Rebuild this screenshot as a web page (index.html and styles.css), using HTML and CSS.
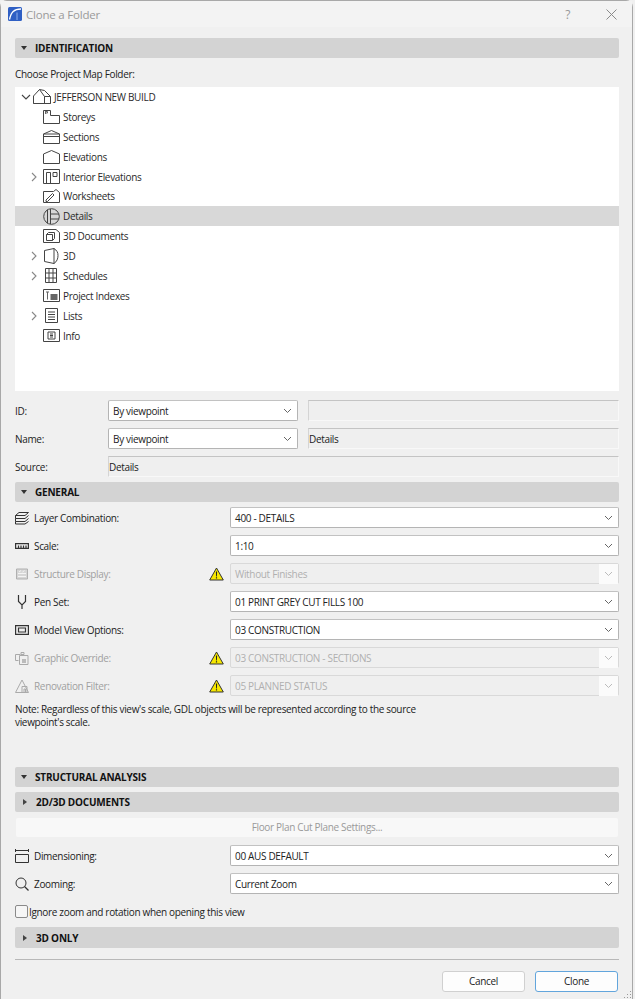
FILE: index.html
```html
<!DOCTYPE html>
<html lang="en">
<head>
<meta charset="utf-8">
<title>Clone a Folder</title>
<link rel="stylesheet" href="styles.css">
</head>
<body>
<div class="window">
  <header class="titlebar">
    <svg class="app-icon" width="14" height="14" viewBox="0 0 14 14"><rect width="14" height="14" rx="1.5" fill="#2f5fc4"/><path d="M1.5 12.5C3 5 6 2 13 2" fill="none" stroke="#fff" stroke-width="1.3"/><path d="M9 13V5.5" stroke="#8fb0ea" stroke-width="1"/></svg>
    <span class="title">Clone a Folder</span>
    <span class="help">?</span>
    <svg class="close" width="11" height="11" viewBox="0 0 11 11"><path d="M.5.5l10 10M10.500.5l-10 10" stroke="#8a8a8a" fill="none"/></svg>
  </header>
  <main class="content">
    <div class="section s-identification"><i class="tri-down"></i>IDENTIFICATION</div>
    <div class="choose">Choose Project Map Folder:</div>
    <div class="tree">
      <div class="node root"><svg class="chev" width="10" height="10" viewBox="0 0 10 10"><path d="M1 3l4 4 4-4" fill="none" stroke="#444" stroke-width="1.1"/></svg>
        <svg class="ic" width="18" height="15" viewBox="0 0 18 15"><path d="M.5 14.500V7L6.500.500l5 1 6 6v7zM6.500.500l5 7v7M11.500 7.500h6M.5 14.500h17" fill="none" stroke="#444"/></svg><span>JEFFERSON NEW BUILD</span></div>
      <div class="node"><svg class="ic" width="17" height="14" viewBox="0 0 17 14"><path d="M.5.500h7v5h9v8H.5z" fill="none" stroke="#444"/><path d="M2.500 1v3M2.500 1.500h2v1.500h-2" fill="none" stroke="#666"/></svg><span>Storeys</span></div>
      <div class="node"><svg class="ic" width="17" height="14" viewBox="0 0 17 14"><path d="M.5 4L8.500.5l8 3.500v9.500H.5zM.5 4h16M.5 6.500h16" fill="none" stroke="#444"/></svg><span>Sections</span></div>
      <div class="node"><svg class="ic" width="17" height="14" viewBox="0 0 17 14"><path d="M.5 4L8.500.5l8 3.500v9.500H.5z" fill="none" stroke="#444"/></svg><span>Elevations</span></div>
      <div class="node"><svg class="chev" width="10" height="10" viewBox="0 0 10 10"><path d="M3 1l4 4-4 4" fill="none" stroke="#888" stroke-width="1.100"/></svg><svg class="ic" width="17" height="15" viewBox="0 0 17 15"><path d="M.5.500h16v14H.5zM3.500 14V3.500h4V14M10 3.500h4v4h-4z" fill="none" stroke="#444"/></svg><span>Interior Elevations</span></div>
      <div class="node"><svg class="ic" width="17" height="14" viewBox="0 0 17 14"><path d="M.5 2.500h10L13 .5l3.500 3v10H.5zM3 11l6.500-6.500L11 6l-6.500 6.500H3z" fill="none" stroke="#444"/></svg><span>Worksheets</span></div>
      <div class="node selected"><svg class="ic" width="17" height="17" viewBox="0 0 17 17"><circle cx="8.500" cy="8.500" r="7.800" fill="none" stroke="#444"/><path d="M4.500 1.500v14M7.500 1v15M7.500 6h8.500M7.500 11h8.500" fill="none" stroke="#444"/></svg><span>Details</span></div>
      <div class="node"><svg class="ic" width="17" height="14" viewBox="0 0 17 14"><path d="M.5.500h12.500l3.500 3v10H.5zM3.500 5.500h6v6h-6zM3.500 5.500l2-2h6v6l-2 2" fill="none" stroke="#444"/></svg><span>3D Documents</span></div>
      <div class="node"><svg class="chev" width="10" height="10" viewBox="0 0 10 10"><path d="M3 1l4 4-4 4" fill="none" stroke="#888" stroke-width="1.100"/></svg><svg class="ic" width="17" height="16" viewBox="0 0 17 16"><path d="M1.500 2.500L11 .5c3 2 4 4 4 7s-1 6-4 8l-9.500-2zM11 .5v15" fill="none" stroke="#444"/></svg><span>3D</span></div>
      <div class="node"><svg class="chev" width="10" height="10" viewBox="0 0 10 10"><path d="M3 1l4 4-4 4" fill="none" stroke="#888" stroke-width="1.100"/></svg><svg class="ic" width="17" height="15" viewBox="0 0 17 15"><path d="M2.500.5h11v14h-11zM2.500 5h11M2.500 10h11M6 .5v14M10 .5v14" fill="none" stroke="#444"/></svg><span>Schedules</span></div>
      <div class="node"><svg class="ic" width="17" height="13" viewBox="0 0 17 13"><path d="M.5.500h16v12H.5z" fill="none" stroke="#444"/><path d="M3 2.500h3v1H5v7H4v-7H3zM7.500 5h7v6h-7z" fill="#666"/></svg><span>Project Indexes</span></div>
      <div class="node"><svg class="chev" width="10" height="10" viewBox="0 0 10 10"><path d="M3 1l4 4-4 4" fill="none" stroke="#888" stroke-width="1.100"/></svg><svg class="ic" width="17" height="15" viewBox="0 0 17 15"><path d="M2.500.5h12v14h-12zM5 4h7M5 6.500h7M5 9h7M5 11.500h7" fill="none" stroke="#444"/></svg><span>Lists</span></div>
      <div class="node"><svg class="ic" width="17" height="13" viewBox="0 0 17 13"><path d="M.5.500h16v12H.5zM5 3h7v7H5zM7 5h3M7 6.500h3M7 8h3" fill="none" stroke="#444"/></svg><span>Info</span></div>
    </div>

    <div class="id-row first"><label class="id-label">ID:</label><div class="select"><span>By viewpoint</span><svg class="arrow" width="9" height="6" viewBox="0 0 9 6"><path d="M1 1l3.500 3.500L8 1" fill="none" stroke="#666"/></svg></div><div class="field"></div></div>
    <div class="id-row"><label class="id-label">Name:</label><div class="select"><span>By viewpoint</span><svg class="arrow" width="9" height="6" viewBox="0 0 9 6"><path d="M1 1l3.500 3.500L8 1" fill="none" stroke="#666"/></svg></div><div class="field">Details</div></div>
    <div class="id-row"><label class="id-label">Source:</label><div class="field wide">Details</div></div>

    <div class="section s-general"><i class="tri-down"></i>GENERAL</div>
    <div class="opts">
      <div class="opt"><svg class="oi" width="14" height="14" viewBox="0 0 14 14"><path d="M.5 4.500L4 1.500h9.500L10 4.500zM.5 4.500v3h9.500l3.500-3M.5 7.500v3h9.500l3.500-3M.5 10.500v2.500h9.500l3.500-2.500" fill="none" stroke="#333"/></svg><span class="opt-label">Layer Combination:</span><div class="select"><span>400 - DETAILS</span><svg class="arrow" width="9" height="6" viewBox="0 0 9 6"><path d="M1 1l3.500 3.500L8 1" fill="none" stroke="#666"/></svg></div></div>
      <div class="opt"><svg class="oi" width="14" height="14" viewBox="0 0 14 14"><path d="M.6 4.600h12.800v4.800H.6zM3.500 6.500v3M6 6.500v3M8.500 6.500v3M11 6.500v3" fill="none" stroke="#333" stroke-width="1.200"/></svg><span class="opt-label">Scale:</span><div class="select"><span>1:10</span><svg class="arrow" width="9" height="6" viewBox="0 0 9 6"><path d="M1 1l3.500 3.500L8 1" fill="none" stroke="#666"/></svg></div></div>
      <div class="opt off"><svg class="oi" width="14" height="14" viewBox="0 0 14 14"><path d="M1.500 2h11v10h-11z" fill="#d6d6d6" stroke="#b0b0b0"/><path d="M3 6.500h8M3 9.500h8M4 5l2-1.500M7.500 5l2-1.500" fill="none" stroke="#f4f4f4"/></svg><span class="opt-label">Structure Display:</span><svg class="warn" width="15" height="14" viewBox="0 0 15 14"><path d="M7.500 1L14.300 13H.7z" fill="#f7e800" stroke="#333"/><path d="M6.900 4.500h1.200l-.2 5h-.8zM6.900 10.300h1.200v1.300H6.900z" fill="#222"/></svg><div class="select"><span>Without Finishes</span><svg class="arrow" width="9" height="6" viewBox="0 0 9 6"><path d="M1 1l3.500 3.500L8 1" fill="none" stroke="#bbb"/></svg></div></div>
      <div class="opt"><svg class="oi pen" width="14" height="14" viewBox="0 0 14 14"><path d="M3.500 0v6.500L7 10l3.500-3.500V0M7 10v4" fill="none" stroke="#333" stroke-width="1.200"/></svg><span class="opt-label">Pen Set:</span><div class="select"><span>01 PRINT GREY CUT FILLS 100</span><svg class="arrow" width="9" height="6" viewBox="0 0 9 6"><path d="M1 1l3.500 3.500L8 1" fill="none" stroke="#666"/></svg></div></div>
      <div class="opt"><svg class="oi" width="14" height="14" viewBox="0 0 14 14"><path d="M.6 2.600h12.800v8.800H.6zM3.500 5h7v4h-7z" fill="none" stroke="#333" stroke-width="1.200"/></svg><span class="opt-label">Model View Options:</span><div class="select"><span>03 CONSTRUCTION</span><svg class="arrow" width="9" height="6" viewBox="0 0 9 6"><path d="M1 1l3.500 3.500L8 1" fill="none" stroke="#666"/></svg></div></div>
      <div class="opt off"><svg class="oi" width="14" height="14" viewBox="0 0 14 14"><path d="M.5 3.500h5M.5 3.500v6h3M6 1.500h3v2H6zM4.500 4.500h8.500v9H4.500z" fill="none" stroke="#aaa"/><path d="M7 8h4v4H7z" fill="#bbb"/></svg><span class="opt-label">Graphic Override:</span><svg class="warn" width="15" height="14" viewBox="0 0 15 14"><path d="M7.500 1L14.300 13H.7z" fill="#f7e800" stroke="#333"/><path d="M6.900 4.500h1.200l-.2 5h-.8zM6.900 10.300h1.200v1.300H6.900z" fill="#222"/></svg><div class="select"><span>03 CONSTRUCTION - SECTIONS</span><svg class="arrow" width="9" height="6" viewBox="0 0 9 6"><path d="M1 1l3.500 3.500L8 1" fill="none" stroke="#bbb"/></svg></div></div>
      <div class="opt off"><svg class="oi" width="14" height="14" viewBox="0 0 14 14"><path d="M.5 13.500L7 1l6.500 12.500zM7 13V7.500h5v5.500M9 13v-3h1.500v3" fill="none" stroke="#aaa"/></svg><span class="opt-label">Renovation Filter:</span><svg class="warn" width="15" height="14" viewBox="0 0 15 14"><path d="M7.500 1L14.300 13H.7z" fill="#f7e800" stroke="#333"/><path d="M6.900 4.500h1.200l-.2 5h-.8zM6.900 10.300h1.200v1.300H6.900z" fill="#222"/></svg><div class="select"><span>05 PLANNED STATUS</span><svg class="arrow" width="9" height="6" viewBox="0 0 9 6"><path d="M1 1l3.500 3.500L8 1" fill="none" stroke="#bbb"/></svg></div></div>
    </div>
    <p class="note">Note: Regardless of this view's scale, GDL objects will be represented according to the source viewpoint's scale.</p>

    <div class="section s-structural"><i class="tri-down"></i>STRUCTURAL ANALYSIS</div>
    <div class="section s-docs"><i class="tri-right"></i>2D/3D DOCUMENTS</div>
    <div class="wide-btn">Floor Plan Cut Plane Settings...</div>
    <div class="opts opts-docs">
      <div class="opt"><svg class="oi" width="14" height="14" viewBox="0 0 14 14"><path d="M.5 1.500h13M.5 5.500h13v8H.5z" fill="none" stroke="#333"/><path d="M.5 0v3M13.500 0v3" stroke="#333"/></svg><span class="opt-label">Dimensioning:</span><div class="select"><span>00 AUS DEFAULT</span><svg class="arrow" width="9" height="6" viewBox="0 0 9 6"><path d="M1 1l3.500 3.500L8 1" fill="none" stroke="#666"/></svg></div></div>
      <div class="opt"><svg class="oi" width="14" height="14" viewBox="0 0 14 14"><circle cx="6" cy="6" r="5" fill="none" stroke="#333"/><path d="M9.500 9.500l4 4" stroke="#333" stroke-width="1.200"/></svg><span class="opt-label">Zooming:</span><div class="select"><span>Current Zoom</span><svg class="arrow" width="9" height="6" viewBox="0 0 9 6"><path d="M1 1l3.500 3.500L8 1" fill="none" stroke="#666"/></svg></div></div>
    </div>
    <div class="check"><i class="box"></i><span>Ignore zoom and rotation when opening this view</span></div>
    <div class="section s-3d"><i class="tri-right"></i>3D ONLY</div>
    <hr class="rule">
    <div class="actions">
      <div class="btn">Cancel</div>
      <div class="btn primary">Clone</div>
    </div>
  </main>
  <svg class="grip" width="8" height="8" viewBox="0 0 8 8"><path d="M6 0h1v1H6zM3 3h1v1H3zM6 3h1v1H6zM0 6h1v1H0zM3 6h1v1H3zM6 6h1v1H6z" fill="#999"/></svg>
</div>
</body>
</html>
```
FILE: styles.css
```css
html, body { margin: 0; padding: 0; background: #f0f0f0; }
body {
  font-family: "Open Sans", "Noto Sans", "Liberation Sans", sans-serif;
  font-size: 10px;
  letter-spacing: -0.33px;
  color: #222;
  width: 635px;
  height: 999px;
  overflow: hidden;
}
.window {
  position: relative;
  box-sizing: border-box;
  width: 633px;
  height: 999px;
  background: #f0f0f0;
  border: 1px solid #a8a8a8;
  border-bottom: 0;
  border-radius: 7px 7px 0 0;
}
.titlebar {
  display: flex;
  align-items: center;
  height: 26px;
  padding: 0 15px 0 7px;
  background: #f3f3f3;
}
.app-icon { flex: none; margin-right: 4px; }
.title { font-size: 11.5px; letter-spacing: -0.2px; color: #9a9a9a; flex: 1; }
.help { font-size: 12px; color: #999; margin-right: 36px; }
.close { flex: none; }
.content { padding: 11px 13px 0 14px; }
.section {
  display: flex;
  align-items: center;
  height: 20px;
  background: #d3d3d3;
  border-radius: 2px;
  font-weight: 700;
  font-size: 10px;
  letter-spacing: -0.2px;
  color: #111;
}
.tri-down { width: 0; height: 0; margin: 0 8px 0 6px; border: 3.500px solid transparent; border-top: 4px solid #333; border-bottom: 0; }
.tri-right { width: 0; height: 0; margin: 0 9px 0 8px; border: 3.500px solid transparent; border-left: 4px solid #444; border-right: 0; }
.choose { height: 13px; line-height: 13px; margin-top: 10px; }
.tree {
  box-sizing: border-box;
  height: 304px;
  margin-top: 6px;
  background: #fff;
}
.node {
  position: relative;
  display: flex;
  align-items: center;
  height: 19.9px;
  padding-left: 28px;
  color: #2a2a2a;
  line-height: 18px;
}
.node.root { padding-left: 18px; }
.node .ic { flex: none; margin-right: 3px; }
.node.root .ic { margin-right: 3px; }
.node.selected { background: #d8d8d8; }
.chev { position: absolute; left: 14px; top: 5px; }
.root .chev { left: 6px; top: 5px; }
.id-row {
  display: flex;
  align-items: stretch;
  height: 21px;
  margin-top: 7px;
}
.id-row.first { margin-top: 9px; }
.id-label { width: 93px; line-height: 23px; flex: none; }
.select {
  box-sizing: border-box;
  display: flex;
  align-items: center;
  justify-content: space-between;
  background: #fff;
  border: 1px solid #b4b4b4;
  border-top-color: #c2c2c2;
  border-radius: 2px;
  padding: 0 5px 0 4px;
  color: #222;
}
.id-row .select { width: 190px; flex: none; margin-right: 10px; }
.field {
  box-sizing: border-box;
  flex: 1;
  line-height: 21px;
  padding-left: 0;
  background: #efefef;
  border-top: 1px solid #c4c4c4;
  border-left: 1px solid #d4d4d4;
  border-bottom: 1px solid #f8f8f8;
  border-right: 1px solid #f8f8f8;
}
.s-general { margin-top: 5px; }
.opts { display: flex; flex-direction: column; gap: 7px; margin-top: 5px; }
.opt { display: flex; align-items: center; height: 21px; color: #222; }
.oi { flex: none; margin-right: 5px; }
.opt-label { flex: 1; }
.opt .select { width: 389px; flex: none; height: 21px; }
.opt.off { color: #a0a0a0; }
.off .select { background: #efefef; border-color: #d9d9d9; color: #b0b0b0; padding-right: 0; }
.off .arrow { box-sizing: content-box; background: #fbfbfb; padding: 7px 5px; }
.warn { flex: none; margin-right: 6px; }
.note { width: 420px; margin: 7px 0 0; line-height: 13px; }
.s-structural { margin-top: 38px; }
.s-docs { margin-top: 5px; }
.wide-btn {
  box-sizing: border-box;
  height: 19px;
  line-height: 19px;
  margin: 6px 1px 0;
  background: #f8f8f8;
  border-radius: 2px;
  text-align: center;
  color: #9a9a9a;
}
.opts-docs { margin-top: 8px; }
.check { display: flex; align-items: center; height: 13px; margin-top: 11px; }
.box { box-sizing: border-box; width: 13px; height: 13px; background: #f6f6f6; border: 1px solid #8a8a8a; border-radius: 2px; margin-right: 1px; }
.s-3d { height: 21px; margin-top: 9px; }
.rule { height: 1px; border: 0; margin: 11px 0 0; background: #b8b8b8; }
.actions { display: flex; justify-content: flex-end; gap: 10px; margin-top: 11px; padding-right: 1px; }
.btn {
  box-sizing: border-box;
  width: 83px;
  height: 21px;
  line-height: 19px;
  text-align: center;
  background: #fdfdfd;
  border: 1px solid #d0d0d0;
  border-radius: 3px;
  color: #222;
}
.btn.primary { border-color: #62a5dc; }
.grip { position: absolute; right: 0; bottom: 0; }
```
